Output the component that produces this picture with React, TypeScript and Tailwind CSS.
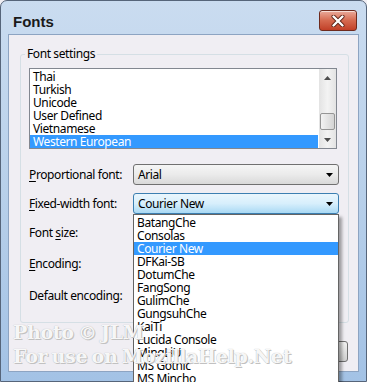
import React from "react";

const listItems = ["Thai", "Turkish", "Unicode", "User Defined", "Vietnamese", "Western European"];
const fixedFonts = [
  "BatangChe",
  "Consolas",
  "Courier New",
  "DFKai-SB",
  "DotumChe",
  "FangSong",
  "GulimChe",
  "GungsuhChe",
  "KaiTi",
  "Lucida Console",
  "MingLiU",
  "MS Gothic",
  "MS Mincho",
  "MS PGothic",
];

const Tri: React.FC<{ up?: boolean; color?: string }> = ({ up, color = "#000" }) => (
  <svg width="7" height="4" viewBox="0 0 7 4">
    <path d={up ? "M0 4h7L3.5 0z" : "M0 0h7L3.5 4z"} fill={color} />
  </svg>
);

const Combo: React.FC<{ value?: string; focused?: boolean }> = ({ value, focused }) => (
  <div
    className={`flex h-[21px] w-[206px] items-center justify-between rounded-[3px] border pl-[4px] pr-[5px] ${
      focused
        ? "border-[#3c7fb1] bg-linear-to-b from-[#eaf6fd] via-[#d7effc] to-[#a9d9f4]"
        : "border-[#707070] bg-linear-to-b from-[#f5f5f5] via-[#ebebeb] to-[#d9d9d9]"
    }`}
  >
    <span>{value}</span>
    <Tri />
  </div>
);

const Row: React.FC<{ label: React.ReactNode; className?: string; children: React.ReactNode }> = ({
  label,
  className = "",
  children,
}) => (
  <div className={`flex h-[21px] items-center ${className}`}>
    <div className="w-[104px]">{label}</div>
    {children}
  </div>
);

export default function App() {
  return (
    <div className="h-[382px] w-[367px] overflow-hidden bg-[#f0eef3] font-['Noto_Sans',sans-serif] text-[12px] tracking-[-0.4px] text-black">
      <div className="relative flex h-[382px] flex-col rounded-t-[7px] border border-[#56657a] bg-linear-to-b from-[#cadcf0] via-[#b8d0ea] to-[#a3c2e5] px-[7px] pb-[9px]">
        {/* title bar */}
        <div className="flex h-[33px] items-start justify-between pl-[5px] pr-[2px]">
          <div className="pt-[12px] font-['Liberation_Sans',sans-serif] text-[15px] font-bold leading-[17px] tracking-normal text-[#1a1a1a]">
            Fonts
          </div>
          <div className="mt-[9px] flex h-[21px] w-[38px] items-center justify-center rounded-[3px] border border-[#6e2a1d] bg-linear-to-b from-[#e9aa9b] via-[#d5694f] to-[#c13f27] shadow-[inset_0_1px_0_rgba(255,255,255,0.6)]">
            <svg width="14" height="12" viewBox="0 0 14 12">
              <path d="M2.5 1.5l9 9M11.5 1.5l-9 9" stroke="#5a2014" strokeWidth="4" strokeLinecap="round" />
              <path d="M2.5 1.5l9 9M11.5 1.5l-9 9" stroke="#fff" strokeWidth="2.4" strokeLinecap="round" />
            </svg>
          </div>
        </div>

        {/* client area */}
        <div className="flex-1 border border-[#8da4c2] bg-[#f0eef3]">
          <fieldset className="ml-[11px] mt-[11px] w-[329px] rounded-[3px] border border-[#d5dfe5] px-[8px] pb-[16px]">
            <legend className="-ml-[4px] px-[2px] leading-[16px]">Font settings</legend>

            {/* list box */}
            <div className="mt-[6px] flex h-[81px] w-[308px] border border-[#828790] bg-white">
              <div className="flex-1 pt-[1px]">
                {listItems.map((it) => (
                  <div
                    key={it}
                    className={`h-[13px] pl-[3px] leading-[13px] ${
                      it === "Western European" ? "bg-[#3399ff] text-white" : ""
                    }`}
                  >
                    {it}
                  </div>
                ))}
              </div>
              <div className="ml-[1px] flex w-[17px] flex-col bg-linear-to-r from-[#e3e3e3] via-[#f3f3f3] to-[#e3e3e3]">
                <div className="flex h-[17px] items-center justify-center">
                  <Tri up color="#4d4d4d" />
                </div>
                <div className="flex-1">
                  <div className="ml-[1px] mt-[27px] h-[17px] w-[15px] rounded-[2px] border border-[#959595] bg-linear-to-r from-[#f3f3f3] to-[#d4d4d4]" />
                </div>
                <div className="flex h-[17px] items-center justify-center">
                  <Tri color="#4d4d4d" />
                </div>
              </div>
            </div>

            <Row
              className="mt-[15px]"
              label={
                <>
                  <span className="underline underline-offset-2">P</span>roportional font:
                </>
              }
            >
              <Combo value="Arial" />
            </Row>

            <Row
              className="mt-[8px]"
              label={
                <>
                  <span className="underline underline-offset-2">F</span>ixed-width font:
                </>
              }
            >
              <div className="relative">
                <Combo value="Courier New" focused />
                {/* open dropdown */}
                <div className="absolute left-0 top-[21px] z-10 h-[200px] w-[206px] border border-[#646464] bg-white pt-[1px] shadow-[3px_3px_3px_rgba(0,0,0,0.35)]">
                  {fixedFonts.map((f) => (
                    <div
                      key={f}
                      className={`h-[13px] pl-[3px] leading-[13px] ${
                        f === "Courier New" ? "bg-[#3399ff] text-white" : ""
                      }`}
                    >
                      {f}
                    </div>
                  ))}
                </div>
              </div>
            </Row>

            {/* these combos sit under the open dropdown */}
            <Row
              className="mt-[8px]"
              label={
                <>
                  Font <span className="underline underline-offset-2">s</span>ize:
                </>
              }
            >
              <Combo />
            </Row>

            <Row
              className="mt-[10px]"
              label={
                <>
                  <span className="underline underline-offset-2">E</span>ncoding:
                </>
              }
            >
              <Combo />
            </Row>

            <Row className="mt-[11px]" label="Default encoding:">
              <Combo />
            </Row>
          </fieldset>

          <div className="ml-[11px] mt-[18px] flex w-[328px] justify-end gap-[6px]">
            <div className="h-[21px] w-[75px] rounded-[3px] border border-[#707070] bg-linear-to-b from-[#f2f2f2] to-[#cfcfcf]" />
            <div className="h-[21px] w-[75px] rounded-[3px] border border-[#707070] bg-linear-to-b from-[#f2f2f2] to-[#cfcfcf]" />
          </div>
        </div>

        {/* watermark */}
        <div className="pointer-events-none absolute left-[12px] top-[319px] z-20 font-['DejaVu_Serif',serif] text-[19px] font-bold leading-[24px] tracking-[-0.3px] text-white/90 [word-spacing:-2px] [text-shadow:0_0_1px_#a8a8a8,1px_1px_0_#c4c4c4]">
          <div>Photo © JLM</div>
          <div>For use on MozillaHelp.Net</div>
        </div>
      </div>
    </div>
  );
}
